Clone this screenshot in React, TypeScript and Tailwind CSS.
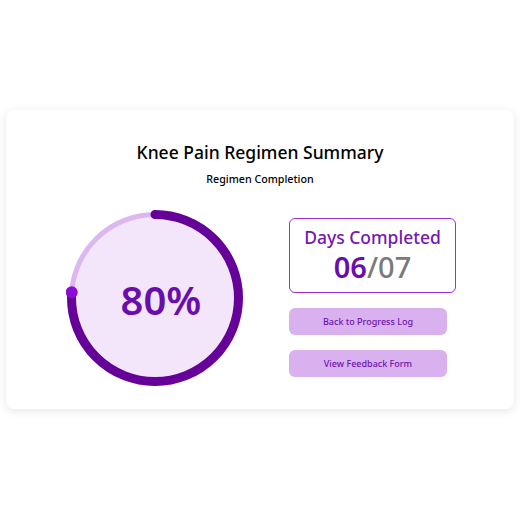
import React from "react";

const font = { fontFamily: '"Noto Sans", "Open Sans", sans-serif' };

function Ring() {
  const r = 83.5;
  const c = 2 * Math.PI * r;
  const deg = 274;
  const len = (c * deg) / 360;
  const rad = (deg * Math.PI) / 180;
  const dx = 89 + r * Math.sin(rad);
  const dy = 89 - r * Math.cos(rad);
  return (
    <div className="relative w-[178px] h-[178px] -mt-[2px] -ml-[1px]">
      <svg width="178" height="178" viewBox="0 0 178 178" className="absolute inset-0">
        <circle cx="89" cy="89" r="82" fill="#f3e6fa" />
        <circle cx="89" cy="89" r={r} fill="none" stroke="#dbb8f1" strokeWidth="5" />
        <circle
          cx="89"
          cy="89"
          r={r}
          fill="none"
          stroke="#650099"
          strokeWidth="9"
          strokeLinecap="round"
          strokeDasharray={`${len} ${c}`}
          transform="rotate(-90 89 89)"
        />
        <circle cx={dx} cy={dy} r="6" fill="#8a0cd6" />
      </svg>
      <div className="absolute inset-0 flex items-center justify-center pl-[12px] pt-[4px]">
        <span className="text-[40px] font-semibold text-[#6a0dad] leading-none">80%</span>
      </div>
    </div>
  );
}

export default function App() {
  return (
    <div className="w-[520px] h-[520px] bg-white pt-[110px] px-[6px]" style={font}>
      <div className="w-[508px] h-[299px] bg-white rounded-lg shadow-[0_2px_10px_rgba(0,0,0,0.10)] pt-[28px]">
        <h1 className="text-center text-[17.5px] leading-[28px] text-black font-medium">
          Knee Pain Regimen Summary
        </h1>
        <p className="text-center text-[10.7px] leading-[16px] text-black mt-[5px] font-medium">
          Regimen Completion
        </p>
        <div className="flex mt-[24px] pl-[61px]">
          <Ring />
          <div className="ml-[45px] pt-[7px] flex flex-col">
            <div className="w-[167px] h-[75px] border border-[#9b2fd6] rounded-md flex flex-col items-center pt-[4px]">
              <div className="text-[17.5px] leading-[28px] text-[#7417b3] font-medium">Days Completed</div>
              <div className="text-[29px] leading-[32px] font-semibold">
                <span className="text-[#6a0dad]">06</span>
                <span className="text-[#7a7a7a] font-medium">/07</span>
              </div>
            </div>
            <button className="mt-[15px] w-[158px] h-[27px] rounded-md bg-[#d9b1ef] text-[9px] text-[#6e12b0] font-medium">
              Back to Progress Log
            </button>
            <button className="mt-[15px] w-[158px] h-[27px] rounded-md bg-[#d9b1ef] text-[9px] text-[#6e12b0] font-medium">
              View Feedback Form
            </button>
          </div>
        </div>
      </div>
    </div>
  );
}
